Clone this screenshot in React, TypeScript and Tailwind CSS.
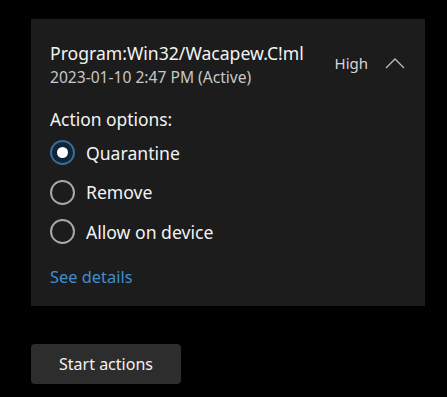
export default function App() {
  const options = [
    { label: "Quarantine", selected: true },
    { label: "Remove", selected: false },
    { label: "Allow on device", selected: false },
  ];
  return (
    <div
      className="w-[447px] h-[397px] bg-black text-white overflow-hidden pt-[19px] pl-[31px]"
      style={{ fontFamily: '"Noto Sans", "Open Sans", sans-serif' }}
    >
      <div className="w-[394px] h-[287px] bg-[#1c1c1c] pl-[19px] pr-[20px] pt-[22px]">
        <div className="flex items-start justify-between">
          <div>
            <div className="text-[17.6px] leading-[24px] text-[#f3f3f3]">Program:Win32/Wacapew.C!ml</div>
            <div className="text-[15.6px] leading-[22px] text-[#c8c8c8] mt-[1px]">2023-01-10 2:47 PM (Active)</div>
          </div>
          <div className="flex items-center gap-[17px] mt-[11px]">
            <span className="text-[15px] text-[#d6d6d6]">High</span>
            <svg width="20" height="12" viewBox="0 0 20 12" fill="none">
              <path d="M1 11 L10 2 L19 11" stroke="#bdbdbd" strokeWidth="1.3" />
            </svg>
          </div>
        </div>
        <div className="mt-[19px] text-[17.4px] leading-[24px] text-[#f3f3f3]">Action options:</div>
        <div className="mt-[9px] flex flex-col gap-[14.5px]">
          {options.map((o) => (
            <div key={o.label} className="flex items-center gap-[11px]">
              {o.selected ? (
                <div className="w-[25px] h-[25px] rounded-full border-2 border-[#3a6b94] bg-[#0f2538] flex items-center justify-center">
                  <div className="w-[11px] h-[11px] rounded-full bg-white" />
                </div>
              ) : (
                <div className="w-[25px] h-[25px] rounded-full border-2 border-[#a8a8a8]" />
              )}
              <span className="text-[17.6px] leading-[24px] text-[#f3f3f3]">{o.label}</span>
            </div>
          ))}
        </div>
        <div className="mt-[23px] text-[16.4px] leading-[20px] text-[#3f8fd0]">See details</div>
      </div>
      <button className="mt-[38px] w-[150px] h-[40px] rounded-[4px] bg-[#2d2d2d] text-[16px] text-[#f3f3f3]">
        Start actions
      </button>
    </div>
  );
}
